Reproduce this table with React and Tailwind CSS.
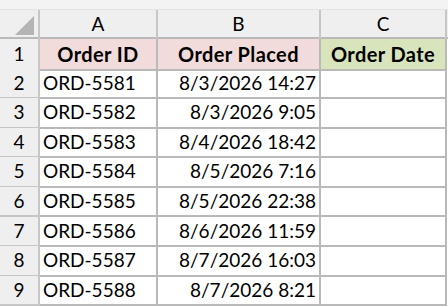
import React from 'react';

const rows = [
  ['ORD-5581', '8/3/2026 14:27'],
  ['ORD-5582', '8/3/2026 9:05'],
  ['ORD-5583', '8/4/2026 18:42'],
  ['ORD-5584', '8/5/2026 7:16'],
  ['ORD-5585', '8/5/2026 22:38'],
  ['ORD-5586', '8/6/2026 11:59'],
  ['ORD-5587', '8/7/2026 16:03'],
  ['ORD-5588', '8/7/2026 8:21'],
];

const App = () => {
  return (
    <div className="w-[448px] h-[307px] overflow-hidden bg-white text-[19px] text-black" style={{ fontFamily: 'Lato, "Open Sans", sans-serif' }}>
      <div className="h-[10px] bg-[#f3f3f3] border-b border-[#e3e3e3]" />

      <div className="grid grid-cols-[40px_118px_163px_126px_1fr] h-[29px] bg-[#efefef] border-b-2 border-[#b9b9b9]">
        <div className="relative border-r-2 border-[#c6c6c6]">
          <div className="absolute right-[4px] bottom-[4px] w-0 h-0 border-l-[19px] border-l-transparent border-b-[19px] border-b-[#b4b4b4]" />
        </div>
        <div className="flex items-center justify-center border-r-2 border-[#c6c6c6]">A</div>
        <div className="flex items-center justify-center border-r-2 border-[#c6c6c6]">B</div>
        <div className="flex items-center justify-center border-r-2 border-[#c6c6c6]">C</div>
        <div />
      </div>

      <div className="grid grid-cols-[40px_118px_163px_126px_1fr] h-[29.6px] font-bold text-[20px] tracking-[0.4px]">
        <div className="flex items-center justify-center bg-[#efefef] border-r-2 border-b-2 border-[#c6c6c6] font-normal text-[19px] tracking-normal">1</div>
        <div className="flex items-center justify-center bg-[#f2dcdb] border-r-2 border-b-2 border-[#b9b9b9]">Order ID</div>
        <div className="flex items-center justify-center bg-[#f2dcdb] border-r-2 border-b-2 border-[#b9b9b9]">Order Placed</div>
        <div className="flex items-center justify-center bg-[#d8e4bc] border-r-2 border-b-2 border-[#b9b9b9]">Order Date</div>
        <div />
      </div>

      {rows.map((r, i) => (
        <div key={r[0]} className="grid grid-cols-[40px_118px_163px_126px_1fr] h-[29.6px]">
          <div className="flex items-center justify-center bg-[#efefef] border-r-2 border-b-2 border-[#c6c6c6]">{i + 2}</div>
          <div className="flex items-center pl-[3px] border-r-2 border-b-2 border-[#b9b9b9]">{r[0]}</div>
          <div className="flex items-center justify-end pr-[3px] border-r-2 border-b-2 border-[#b9b9b9]">{r[1]}</div>
          <div className="border-r-2 border-b-2 border-[#b9b9b9]" />
          <div />
        </div>
      ))}
    </div>
  );
};

export default App;
